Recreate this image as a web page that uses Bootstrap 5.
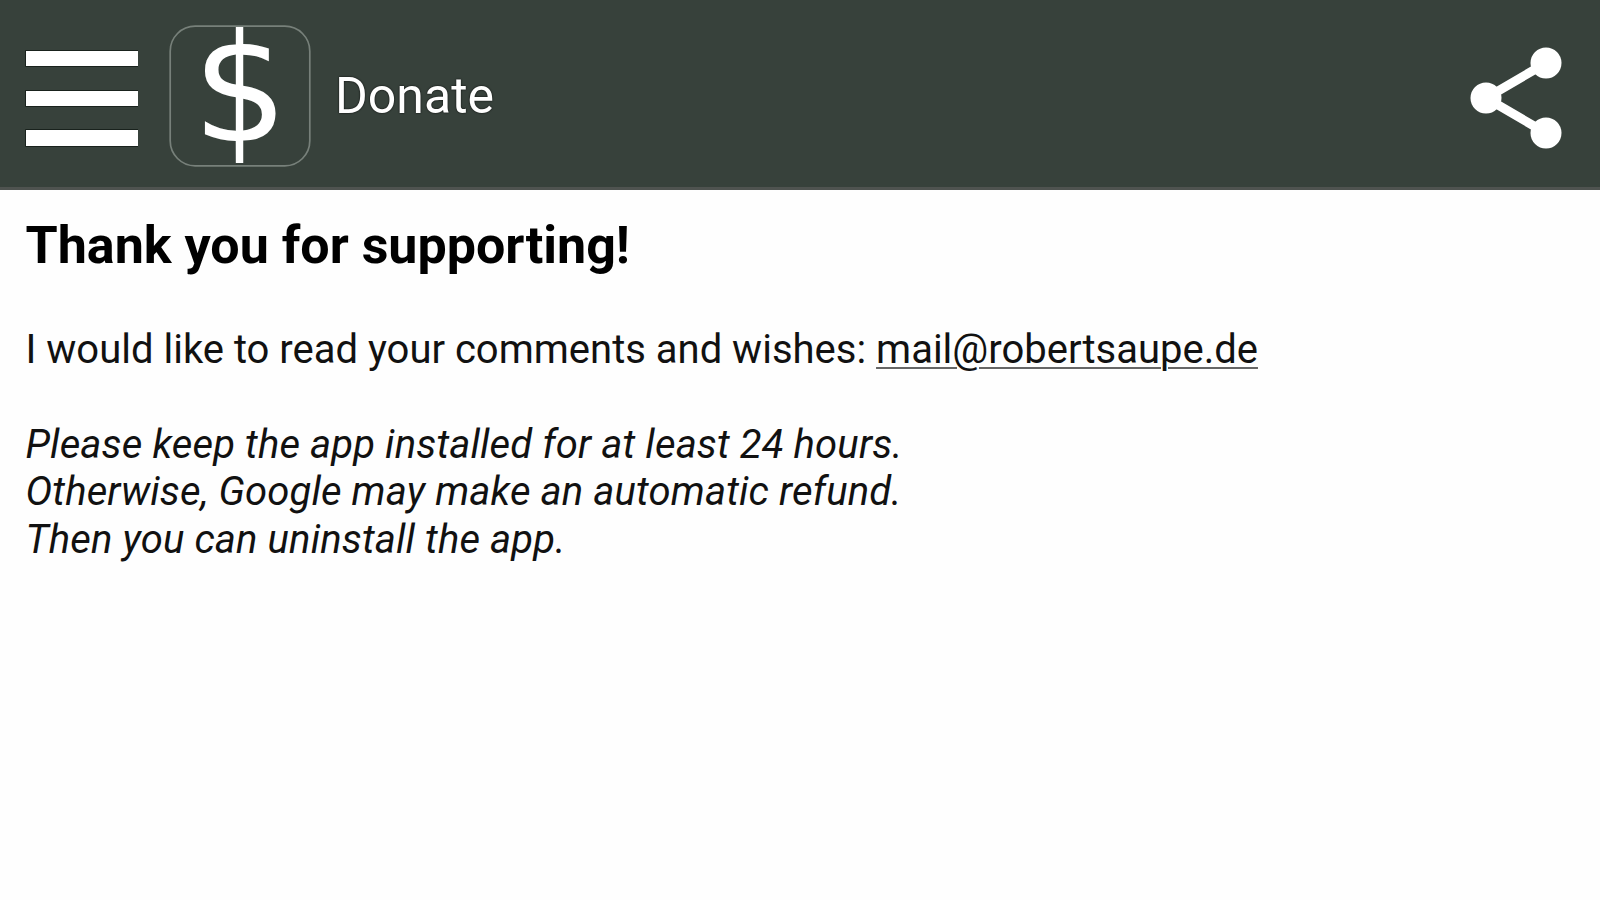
<!DOCTYPE html>
<html lang="en">
<head>
<meta charset="utf-8">
<meta name="viewport" content="width=device-width, initial-scale=1">
<title>Donate</title>
<link href="https://cdn.jsdelivr.net/npm/bootstrap@5.3.0/dist/css/bootstrap.min.css" rel="stylesheet">
<style>
body { font-family: Roboto, "Liberation Sans", sans-serif; color: #111; background: #fefefe; overflow: hidden; }
.topbar { height: 190px; background: #37413b; border-bottom: 3px solid #4f5350; padding: 4px 37px 0 25px; }
.menu-btn { width: 113px; margin-top: 7px; }
.share-btn { margin-top: 4px; }
.app-logo { width: 142px; height: 142px; margin-left: 31px; }
.page-title { font-size: 50px; line-height: 56px; margin-left: 24px; color: #fff; text-shadow: 0 0 2px #000; }
.content { padding: 26px 25.500px; font-size: 40px; line-height: 47.5px; }
.thanks { font-size: 52px; line-height: 60px; color: #000; margin-bottom: 50px; }
.content p { margin-bottom: 47px; }
.content .refund-note { letter-spacing: .13px; }
.content a { color: inherit; text-decoration-thickness: 2px; text-decoration-color: #666; text-underline-offset: 4px; }
</style>
</head>
<body>
<header class="topbar d-flex align-items-center">
  <button class="menu-btn btn p-0 border-0 rounded-0 d-flex" aria-label="Menu">
    <svg width="113" height="100" viewBox="0 0 113 100"><g fill="#fff" stroke="#111914" stroke-width="1.5" paint-order="stroke"><path d="M1 2h112v15H1zM1 42h112v15H1zM1 81h112v16H1z"/></g></svg>
  </button>
  <svg class="app-logo overflow-visible" viewBox="0 0 142 142">
    <rect x="1.2" y="1.2" width="139.600" height="139.600" rx="25" fill="none" stroke="#77807a" stroke-width="1.7"/>
    <text x="71.300" y="116" text-anchor="middle" font-family="DejaVu Sans, sans-serif" font-size="150" fill="#fff">$</text>
  </svg>
  <h1 class="page-title mb-0 fw-normal">Donate</h1>
  <button class="share-btn btn p-0 border-0 ms-auto d-flex" aria-label="Share">
    <svg width="94" height="104" viewBox="0 0 94 104"><g fill="#fff"><path d="M77 17L17 52l60 35" fill="none" stroke="#fff" stroke-width="9"/><circle cx="77" cy="17" r="15.500"/><circle cx="17" cy="52" r="15.500"/><circle cx="77" cy="87" r="15.500"/></g></svg>
  </button>
</header>
<main class="content">
  <h2 class="thanks fw-bold">Thank you for supporting!</h2>
  <p>I would like to read your comments and wishes: <a href="mailto:mail@robertsaupe.de">mail@robertsaupe.de</a></p>
  <p class="refund-note fst-italic mb-0">Please keep the app installed for at least 24 hours.<br>Otherwise, Google may make an automatic refund.<br>Then you can uninstall the app.</p>
</main>
<script src="https://cdn.jsdelivr.net/npm/bootstrap@5.3.0/dist/js/bootstrap.bundle.min.js"></script>
</body>
</html>
